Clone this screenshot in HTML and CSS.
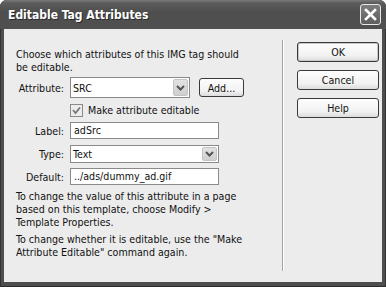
FILE: index.html
```html
<!DOCTYPE html>
<html>
<head>
<meta charset="utf-8">
<link rel="stylesheet" href="styles.css">
</head>
<body>
<div class="window">
  <div class="titlebar">
    <span class="title">Editable Tag Attributes</span>
    <span class="close">
      <svg width="13" height="13" viewBox="0 0 13 13"><path d="M2 2 L11 11 M11 2 L2 11" stroke="#fff" stroke-width="2.6" stroke-linecap="square"/></svg>
    </span>
  </div>
  <div class="client">
    <div class="main">
      <p class="intro">Choose which attributes of this IMG tag should be editable.</p>
      <div class="form">
        <span class="lbl">Attribute:</span>
        <div class="ctl-row">
          <div class="select attr"><span class="val">SRC</span><span class="arrow"><svg width="9" height="6" viewBox="0 0 9 6"><path d="M1 1 L4.5 4.5 L8 1" fill="none" stroke="#555" stroke-width="2"/></svg></span></div>
          <span class="btn add">Add...</span>
        </div>
        <span></span>
        <div class="check"><span class="box"><svg width="11" height="11" viewBox="0 0 11 11"><path d="M2 5 L4.5 8 L9 2.5" fill="none" stroke="#777" stroke-width="1.8"/></svg></span><span>Make attribute editable</span></div>
        <span class="lbl">Label:</span>
        <div class="input">adSrc</div>
        <span class="lbl">Type:</span>
        <div class="select full"><span class="val">Text</span><span class="arrow"><svg width="9" height="6" viewBox="0 0 9 6"><path d="M1 1 L4.5 4.5 L8 1" fill="none" stroke="#555" stroke-width="2"/></svg></span></div>
        <span class="lbl">Default:</span>
        <div class="input">../ads/dummy_ad.gif</div>
      </div>
      <p class="note">To change the value of this attribute in a page based on this template, choose Modify &gt; Template Properties.</p>
      <p class="note second">To change whether it is editable, use the "Make Attribute Editable" command again.</p>
    </div>
    <div class="divider"></div>
    <div class="buttons">
      <span class="btn big default">OK</span>
      <span class="btn big">Cancel</span>
      <span class="btn big">Help</span>
    </div>
  </div>
</div>
</body>
</html>
```

FILE: styles.css
```css
html, body {
  margin: 0;
  padding: 0;
  background: #ffffff;
}

body {
  font-family: "DejaVu Sans Condensed", "DejaVu Sans", sans-serif;
  font-stretch: condensed;
  font-size: 10.6px;
  color: #111;
}

.window {
  width: 386px;
  height: 287px;
  box-sizing: border-box;
  display: flex;
  flex-direction: column;
  background: #4e4e4e;
  border-radius: 7px 7px 0 0;
  overflow: hidden;
  box-shadow: inset 1px 0 0 #333, inset -1px 0 0 #333, inset 0 -1px 0 #2a2a2a;
}

.titlebar {
  height: 29px;
  flex: none;
  box-sizing: border-box;
  display: flex;
  align-items: center;
  justify-content: space-between;
  padding: 0 5px 0 8px;
  background: linear-gradient(#7a7a7a 0px, #5c5c5c 3px, #4e4e4e 12px, #505050 100%);
  color: #fff;
}

.title {
  font-family: "DejaVu Sans Condensed", "DejaVu Sans", sans-serif;
  font-stretch: condensed;
  font-weight: bold;
  font-size: 12px;
  text-shadow: 1px 1px 0 #2a2a2a;
}

.close {
  width: 19px;
  height: 19px;
  border: 1px solid #e8e8e8;
  border-radius: 3px;
  background: linear-gradient(#7d7d7d, #5f5f5f);
  display: flex;
  align-items: center;
  justify-content: center;
}

.client {
  flex: 1;
  margin: 0 4px 5px 4px;
  background: #ececec;
  display: flex;
}

.main {
  width: 266px;
  padding: 19px 0 0 12px;
}

.intro {
  margin: 0;
  max-width: 236px;
  line-height: 13px;
}

.form {
  margin-top: 3px;
  display: grid;
  grid-template-columns: 48px 1fr;
  grid-template-rows: 21px 14px 17px 19px 17px;
  column-gap: 6px;
  row-gap: 5px;
}

.lbl {
  text-align: right;
  align-self: center;
  white-space: nowrap;
}

.ctl-row {
  display: flex;
  align-items: center;
  gap: 9px;
}

.select {
  box-sizing: border-box;
  border: 1px solid #8a8a8a;
  background: #fff;
  display: flex;
  align-items: stretch;
  justify-content: space-between;
}

.select .val {
  padding-left: 2px;
  align-self: center;
}

.select.attr {
  width: 120px;
  height: 21px;
}

.select.full {
  width: 149px;
  height: 18px;
  align-self: end;
}

.arrow {
  width: 15px;
  margin: 1px;
  border-radius: 2px;
  background: linear-gradient(#e2e2e2, #cfcfcf);
  border: 1px solid #c4c4c4;
  box-sizing: border-box;
  display: flex;
  align-items: center;
  justify-content: center;
}

.input {
  box-sizing: border-box;
  width: 149px;
  height: 17px;
  border: 1px solid #8a8a8a;
  background: #fff;
  padding-left: 3px;
  line-height: 15px;
}

.check {
  display: flex;
  align-items: center;
  gap: 5px;
}

.box {
  width: 13px;
  height: 13px;
  box-sizing: border-box;
  border: 1px solid #8a8a8a;
  background: #ececec;
  display: flex;
  align-items: center;
  justify-content: center;
}

.btn {
  box-sizing: border-box;
  border: 1px solid #3a3a3a;
  border-radius: 3px;
  background: linear-gradient(#fdfdfd, #f2f2f2 70%, #dcdcdc);
  display: flex;
  align-items: center;
  justify-content: center;
}

.btn.add {
  width: 45px;
  height: 19px;
}

.note {
  margin: 5px 0 0 0;
  max-width: 236px;
  line-height: 13px;
}

.note.second {
  margin-top: 4px;
}

.divider {
  width: 0;
  margin: 11px 0 11px 0;
  border-left: 1px solid #a3a3a3;
  border-right: 1px solid #ffffff;
}

.buttons {
  display: flex;
  flex-direction: column;
  gap: 8px;
  padding: 13px 0 0 13px;
}

.btn.big {
  width: 82px;
  height: 20px;
}

.btn.default {
  box-shadow: inset 0 0 0 1px #c8c8c8;
}
```
